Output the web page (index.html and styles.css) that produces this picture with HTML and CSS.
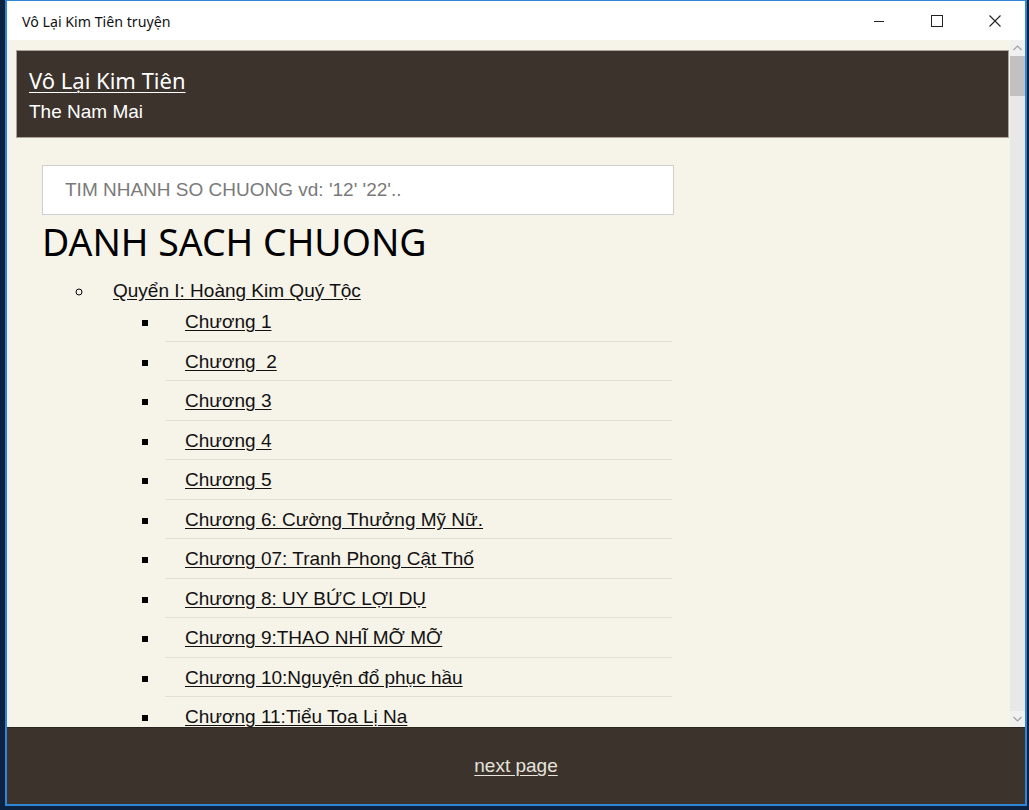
FILE: index.html
```html
<!DOCTYPE html>
<html lang="vi">
<head>
<meta charset="utf-8">
<title>Vô Lại Kim Tiên truyện</title>
<link rel="stylesheet" href="styles.css">
</head>
<body>
<div class="window">
  <div class="titlebar">
    <span class="wintitle">Vô Lại Kim Tiên truyện</span>
    <div class="controls">
      <span class="ctl"><svg width="12" height="12" viewBox="0 0 12 12"><path d="M1 6.5h10" stroke="#222" stroke-width="1"/></svg></span>
      <span class="ctl"><svg width="12" height="12" viewBox="0 0 12 12"><rect x="0.5" y="0.5" width="11" height="11" fill="none" stroke="#222" stroke-width="1"/></svg></span>
      <span class="ctl"><svg width="12" height="12" viewBox="0 0 12 12"><path d="M0.5 0.5L11.5 11.5M11.5 0.5L0.5 11.5" stroke="#222" stroke-width="1.1"/></svg></span>
    </div>
  </div>
  <div class="client">
    <div class="viewport">
      <div class="page">
        <header class="hero">
          <a class="hero-title" href="#">Vô Lại Kim Tiên</a>
          <div class="hero-author">The Nam Mai</div>
        </header>
        <main class="content">
          <input class="search" type="text" placeholder="TIM NHANH SO CHUONG vd: '12' '22'..">
          <h1 class="heading">DANH SACH CHUONG</h1>
          <ul class="volumes">
            <li class="volume">
              <a href="#">Quyển I: Hoàng Kim Quý Tộc</a>
              <ul class="chapters">
                <li><a href="#">Chương 1</a></li>
                <li><a href="#">Chương&nbsp; 2</a></li>
                <li><a href="#">Chương 3</a></li>
                <li><a href="#">Chương 4</a></li>
                <li><a href="#">Chương 5</a></li>
                <li><a href="#">Chương 6: Cường Thưởng Mỹ Nữ.</a></li>
                <li><a href="#">Chương 07: Tranh Phong Cật Thố</a></li>
                <li><a href="#">Chương 8: UY BỨC LỢI DỤ</a></li>
                <li><a href="#">Chương 9:THAO NHĨ MỠ MỠ</a></li>
                <li><a href="#">Chương 10:Nguyện đổ phục hầu</a></li>
                <li><a href="#">Chương 11:Tiểu Toa Lị Na</a></li>
              </ul>
            </li>
          </ul>
        </main>
      </div>
      <div class="scrollbar">
        <div class="sb-btn"><svg width="9" height="6" viewBox="0 0 9 6"><path d="M0.5 5L4.5 1L8.5 5" fill="none" stroke="#a0a0a0" stroke-width="1.2"/></svg></div>
        <div class="sb-track"><div class="sb-thumb"></div></div>
        <div class="sb-btn"><svg width="9" height="6" viewBox="0 0 9 6"><path d="M0.5 1L4.5 5L8.5 1" fill="none" stroke="#a0a0a0" stroke-width="1.2"/></svg></div>
      </div>
    </div>
    <footer class="footer">
      <a href="#">next page</a>
    </footer>
  </div>
</div>
</body>
</html>
```

FILE: styles.css
```css
html, body {
  margin: 0;
  padding: 0;
}
body {
  background: #0b2340;
  width: 1029px;
  height: 810px;
  overflow: hidden;
}
.window {
  margin-left: 5px;
  width: 1018px;
  height: 803px;
  border-top: 1px solid #2f86d6;
  border-left: 2px solid #2f86d6;
  border-right: 2px solid #2f86d6;
  border-bottom: 2px solid #2f86d6;
  display: flex;
  flex-direction: column;
  overflow: hidden;
}
.titlebar {
  height: 39px;
  flex: none;
  background: #ffffff;
  display: flex;
  align-items: center;
  justify-content: space-between;
}
.wintitle {
  font-family: "Noto Sans", sans-serif;
  font-size: 14.2px;
  color: #111;
  padding-left: 15px;
  padding-top: 1px;
}
.controls {
  display: flex;
  height: 100%;
  padding-right: 1px;
}
.ctl {
  width: 58px;
  display: flex;
  align-items: center;
  justify-content: center;
}
.client {
  flex: 1;
  display: flex;
  flex-direction: column;
  min-height: 0;
}
.viewport {
  height: 687px;
  flex: none;
  display: flex;
  background: #f6f3e9;
  overflow: hidden;
}
.page {
  flex: 1;
  padding: 10px 1px 0 9px;
  overflow: hidden;
}
.hero {
  background: #3c332c;
  border: 1px solid #a9a398;
  padding: 15px 0 0 12px;
  box-sizing: border-box;
  height: 88px;
}
.hero-title {
  display: block;
  width: max-content;
  font-family: "Noto Sans", sans-serif;
  font-size: 22px;
  line-height: 28px;
  color: #ffffff;
  text-decoration: underline;
  text-underline-offset: 3px;
  text-decoration-thickness: 1px;
}
.hero-author {
  margin-top: 7px;
  font-family: "Liberation Sans", Arial, sans-serif;
  font-size: 19px;
  line-height: 22px;
  color: #ffffff;
}
.content {
  padding: 27px 0 0 26px;
  width: 632px;
}
.search {
  display: block;
  box-sizing: border-box;
  width: 632px;
  height: 50px;
  margin: 0;
  border: 1px solid #cfcfcf;
  background: #ffffff;
  padding: 0 0 0 22px;
  font-family: "Liberation Sans", Arial, sans-serif;
  font-size: 19px;
  color: #333;
  outline: none;
}
.search::placeholder {
  color: #7a7a7a;
}
.heading {
  margin: 2px 0 0;
  font-family: "Noto Sans", sans-serif;
  font-weight: 400;
  font-size: 37.4px;
  line-height: 50px;
  color: #000;
}
.volumes {
  list-style: circle;
  margin: 12px 0 0;
  padding: 0 0 0 52px;
  font-family: "Liberation Sans", Arial, sans-serif;
  font-size: 19px;
  line-height: 23px;
}
.volume {
  padding-left: 19px;
}
.volumes a {
  color: #111;
  text-decoration: underline;
  text-underline-offset: 2px;
}
.chapters {
  list-style: square;
  margin: 0;
  padding: 0 0 0 47px;
  width: 512px;
}
.chapters li {
  padding: 8px 0 8.5px 25px;
  background: linear-gradient(#e1ded6, #e1ded6) no-repeat;
  background-position: 5px 100%;
  background-size: calc(100% - 5px) 1px;
}
.scrollbar {
  width: 15px;
  flex: none;
  background: #e8e8e8;
  display: flex;
  flex-direction: column;
}
.sb-btn {
  height: 16px;
  display: flex;
  align-items: center;
  justify-content: center;
  background: #f0f0f0;
}
.sb-track {
  flex: 1;
}
.sb-thumb {
  height: 40px;
  background: #c1c1c1;
}
.footer {
  flex: 1;
  background: #3c332c;
  display: flex;
  align-items: center;
  justify-content: center;
  border-top: 1px solid #2a231e;
}
.footer a {
  font-family: "Liberation Sans", Arial, sans-serif;
  font-size: 19px;
  color: #e6e3dd;
  text-decoration: underline;
  text-underline-offset: 3px;
}
```
